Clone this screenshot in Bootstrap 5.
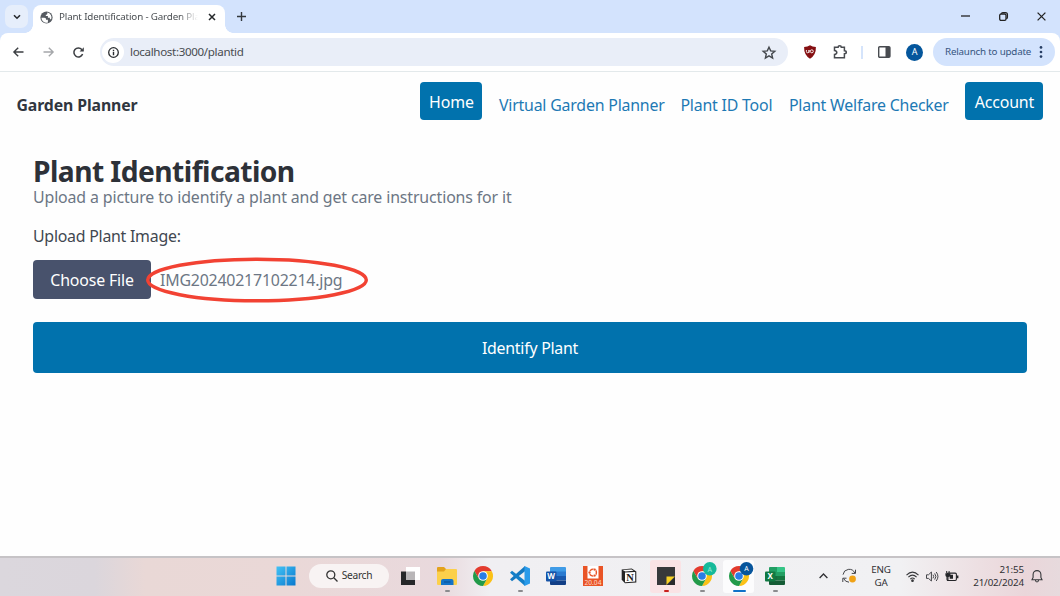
<!DOCTYPE html>
<html lang="en">
<head>
<meta charset="utf-8">
<meta name="viewport" content="width=device-width, initial-scale=1">
<title>Plant Identification - Garden Planner</title>
<link href="https://cdn.jsdelivr.net/npm/bootstrap@5.3.0/dist/css/bootstrap.min.css" rel="stylesheet">
<style>
  body { width:1060px; height:596px; overflow:hidden; background:#fefefe; font-family:"Noto Sans","Open Sans",sans-serif; color:#373c44; font-size:15.9px; letter-spacing:-.13px; }
  svg { display:block; flex:none; overflow:visible; }
  svg text { letter-spacing:0; }
  .tabstrip { height:33px; background:#d3e3fd; padding-left:5px; }
  .tab-menu { width:23px; height:23px; border-radius:7px; background:#e6eefb; margin-top:5px; }
  .active-tab { width:192px; height:28px; margin:5px 0 0 5px; background:#fff; border-radius:8px 8px 0 0; padding:0 9px 4px 7px; }
  .active-tab::before, .active-tab::after { content:""; position:absolute; bottom:0; width:8px; height:8px; }
  .active-tab::before { left:-8px; background:radial-gradient(circle at 0 0, transparent 7.5px, #fff 8px); }
  .active-tab::after { right:-8px; background:radial-gradient(circle at 100% 0, transparent 7.5px, #fff 8px); }
  .tab-title { width:139px; margin-left:6px; padding-top:1px; font-size:9.8px; letter-spacing:-.16px; color:#4a4e52; -webkit-mask-image:linear-gradient(90deg,#000 86%,transparent 100%); }
  .strip-bg { background:#d3e3fd; }
  .toolbar { height:39px; background:#fff; border-radius:8px 8px 0 0; border-bottom:1px solid #e3e9eb; padding:0 5px 0 11px; }
  .address { width:688px; height:28px; border-radius:14px; background:#e9eef8; margin-left:16px; padding:0 12px 0 2px; }
  .info-dot { width:22px; height:22px; border-radius:50%; background:#fff; }
  .url { font-size:11.6px; letter-spacing:-.34px; color:#484c50; margin-left:6px; }
  .avatar { width:17px; height:17px; border-radius:50%; background:#04569c; color:#fff; font-size:9px; }
  .relaunch { width:122px; height:28px; border-radius:14px; background:#d3e3fd; font-size:9.8px; color:#36557f; padding:0 12px 0 12px; letter-spacing:-.2px; }
  .site-nav { height:66px; padding:10px 16.6px 0 16.5px; }
  .brand { font-size:15.8px; font-weight:700; letter-spacing:-.1px; color:#30363f; margin-top:12px; }
  .site-link { color:#1d79b4; margin:12px 16.5px 0 0; text-decoration:none; white-space:nowrap; letter-spacing:-.2px; }
  .fill-btn { --bs-btn-bg:#0172ad; --bs-btn-color:#fff; --bs-btn-hover-bg:#0172ad; --bs-btn-hover-color:#fff; --bs-btn-border-width:0; --bs-btn-border-radius:4px; --bs-btn-font-size:15.9px; --bs-btn-padding-x:0; --bs-btn-padding-y:0; }
  .nav-btn { height:38px; padding-top:3px; }
  .plant-form { margin:0 33px; padding-top:15px; }
  .plant-form h1 { font-size:28.2px; line-height:36px; letter-spacing:-.55px; color:#2d3138; font-weight:700; }
  .sub { line-height:19px; color:#6c7684; margin-top:-1px; }
  .field-label { margin-top:18px; line-height:22px; color:#414750; letter-spacing:-.25px; }
  .file-row { margin-top:13px; height:39px; }
  .choose-btn { width:118px; height:39px; padding-top:2px; --bs-btn-bg:#48526c; --bs-btn-hover-bg:#48526c; letter-spacing:-.16px; }
  .file-name { margin-left:9px; padding-top:2px; width:183px; color:#6c7684; letter-spacing:-.2px; }
  .ring { position:absolute; left:-14px; top:-10px; }
  .submit-btn { height:51px; margin-top:23px; padding-top:2px; letter-spacing:-.25px; }
  .taskbar { position:fixed; z-index:0; bottom:0; height:40px; padding-bottom:2px; border-top:2px solid #c6c3c6; background:linear-gradient(90deg,#dbd7dd 0,#dbd6dc 95px,#e9d8d6 145px,#ead8d7 280px,#e9d9dd 440px,#f0eff2 490px,#f1f1f3 900px,#eddfe2 980px,#ead6da 1025px,#e7dadd 1060px); }
  .task-items { margin-left:267.5px; }
  .task { width:36.5px; height:36px; position:relative; flex:none; }
  .task.open::after { content:""; position:absolute; bottom:2px; left:16px; width:5px; height:2.5px; border-radius:2px; background:#8b8b8e; }
  .task.current::after { width:13px; left:12px; background:#0f72c9; }
  .task.alert-app::after { background:#c8201d; }
  .task.current::before, .task.alert-app::before { content:""; position:absolute; inset:2px 3px 1px 2px; border-radius:3px; background:#fcfcfd; z-index:-1; }
  .task.alert-app::before { background:#fae3e5; }
  .search-pill { width:80px; height:24px; border-radius:12px; background:#f8f3f3; font-size:10.2px; color:#333; margin:0 3px 0 5px; letter-spacing:-.3px; }
  .tray { font-size:9.8px; line-height:13px; color:#303034; letter-spacing:-.13px; padding-right:17px; }
</style>
</head>
<body>
<svg width="0" height="0" class="position-absolute">
  <defs>
    <g id="chrome">
      <path d="M10 5.2H18.8L18.66 5A10 10 0 0 0 1.34 5L5.8 12.4Z" fill="#e33b2e"/>
      <path d="M14.2 12.4 10 20A10 10 0 0 0 18.8 5.2H10Z" fill="#fbc116"/>
      <path d="M5.8 12.4 1.34 5A10 10 0 0 0 10 20L14.2 12.4Z" fill="#229a49"/>
      <circle cx="10" cy="10" r="4.8" fill="#fff"/><circle cx="10" cy="10" r="3.8" fill="#287de6"/>
    </g>
  </defs>
</svg>

<header>
  <div class="tabstrip d-flex">
    <div class="tab-menu d-flex align-items-center justify-content-center">
      <svg width="8" height="6" viewBox="0 0 8 6" fill="none" stroke="#26292d" stroke-width="1.6"><path d="m1 1.2 3 3 3-3"/></svg>
    </div>
    <div class="active-tab position-relative d-flex align-items-center">
      <svg width="13" height="13" viewBox="0 0 13 13"><circle cx="6.5" cy="6.5" r="6.1" fill="#565b61"/><path d="M1.4 6.7h2.8c1.5 0 2 .9 1.8 2h1.9v2.7a5 5 0 0 1-6.5-4.7ZM7.3 1.5v1.3c0 .7-.6 1-1.5 1v1.3H7.9v1.6h2v1.5h1.3a5 5 0 0 0-3.9-6.7Z" fill="#fff"/></svg>
      <div class="tab-title overflow-hidden text-nowrap">Plant Identification - Garden Planner</div>
      <svg class="ms-auto" width="8" height="8" viewBox="0 0 8 8" stroke="#25282b" stroke-width="1.5"><path d="m1 1 6 6m0-6-6 6"/></svg>
    </div>
    <div class="d-flex align-items-center flex-grow-1">
      <svg class="ms-2 me-auto" width="17" height="9" viewBox="-4 0 17 9" stroke="#33383d" stroke-width="1.4"><path d="M0 4.5h9M4.5 0v9"/></svg>
      <div class="d-flex align-items-center" style="gap:29px;padding-right:14.5px">
        <svg width="9" height="9" viewBox="0 0 9 9" stroke="#222" stroke-width="1.3"><path d="M0 4h9"/></svg>
        <svg width="9" height="9" viewBox="0 0 9 9" fill="none" stroke="#222" stroke-width="1.3"><rect x=".7" y="2" width="6.3" height="6.3" rx="1.3"/><path d="M2.4 1.9Q2.5.6 3.8.6h2.7Q8.4.6 8.4 2.6v2.6q0 1.3-1.2 1.5"/></svg>
        <svg width="9" height="9" viewBox="0 0 9 9" stroke="#222" stroke-width="1.3"><path d="m.6.6 7.8 7.8m0-7.8L.6 8.4"/></svg>
      </div>
    </div>
  </div>
  <div class="strip-bg">
  <div class="toolbar d-flex align-items-center">
    <div class="d-flex" style="gap:19px">
      <svg style="margin-left:2px" width="11" height="10" viewBox="0 0 11 10" fill="none" stroke="#3b3e42" stroke-width="1.4"><path d="M10.5 5H1M5.2.7.9 5l4.3 4.3"/></svg>
      <svg width="11" height="10" viewBox="0 0 11 10" fill="none" stroke="#a5a7aa" stroke-width="1.4"><path d="M.5 5H10M5.8.7 10.1 5 5.8 9.3"/></svg>
      <svg width="11" height="11" viewBox="0 0 11 11" fill="none" stroke="#3b3e42" stroke-width="1.5"><path d="M9.6 7.1A4.5 4.5 0 1 1 8.8 2.5l1 1.3"/><path d="M10.8.3v4.2H6.6L8 3.1h1.4V1.7Z" fill="#3b3e42" stroke="none"/></svg>
    </div>
    <div class="address d-flex align-items-center">
      <div class="info-dot d-flex align-items-center justify-content-center">
        <svg width="11" height="11" viewBox="0 0 11 11" fill="none" stroke="#292c30" stroke-width="1.3"><circle cx="5.5" cy="5.5" r="4.8"/><path d="M5.5 4.8v3.4M5.5 2.7V4" stroke-width="1.4"/></svg>
      </div>
      <span class="url">localhost:3000/plantid</span>
      <svg class="ms-auto" width="14" height="13" viewBox="0 0 14 13" fill="none" stroke="#43474c" stroke-width="1.4"><path d="m7 1.2 1.7 3.7 4.1.4-3.1 2.7.9 4L7 9.9 3.4 12l.9-4L1.2 5.3l4.1-.4Z"/></svg>
    </div>
    <svg style="margin-left:16px" width="12" height="14" viewBox="0 0 12 14"><path d="M6 .3Q8.3 2 11.9 2 12.2 10 6 13.7-.2 10 .1 2 3.7 2 6 .3Z" fill="#850f12"/><path d="M2.4 5v1.5q0 1.3 1.3 1.3T5 6.5V5m0 0v2.8" fill="none" stroke="#fff" stroke-width=".9"/><circle cx="7.8" cy="6.3" r="1.5" fill="none" stroke="#fff" stroke-width=".9"/></svg>
    <svg style="margin-left:17px" width="15" height="14" viewBox="0 0 15 14" fill="none" stroke="#484b50" stroke-width="1.5"><path d="M1.5 2.2H5.1Q5.1.8 6.7.8t1.6 1.4h3.1v3.5q1.9 0 1.9 1.5t-1.9 1.5v4.1H1.5V9.5Q3.8 9.2 3.8 7.5T1.5 5.5Z"/></svg>
    <div style="width:2px;height:13px;background:#d5e4fb;margin-left:13px"></div>
    <svg style="margin-left:15px" width="13" height="12" viewBox="0 0 13 12"><rect x=".7" y=".7" width="11.2" height="10.6" rx="1" fill="none" stroke="#484b50" stroke-width="1.4"/><path d="M7.5 1h4.6v10H7.5Z" fill="#484b50"/></svg>
    <div class="avatar d-flex align-items-center justify-content-center" style="margin-left:15px">A</div>
    <div class="relaunch ms-auto d-flex align-items-center justify-content-between text-nowrap"><span>Relaunch to update</span>
      <svg width="4" height="12" viewBox="0 0 4 12" fill="#263e64"><circle cx="2" cy="1.4" r="1.35"/><circle cx="2" cy="6" r="1.35"/><circle cx="2" cy="10.6" r="1.35"/></svg>
    </div>
  </div>
  </div>
</header>

<nav class="site-nav d-flex align-items-start">
  <div class="brand text-nowrap">Garden Planner</div>
  <div class="d-flex align-items-start ms-auto">
    <a class="btn fill-btn nav-btn d-flex align-items-center justify-content-center" style="width:62px;margin-right:16.5px">Home</a>
    <a class="site-link" style="width:165px">Virtual Garden Planner</a>
    <a class="site-link" style="width:92px">Plant ID Tool</a>
    <a class="site-link" style="width:160px">Plant Welfare Checker</a>
    <a class="btn fill-btn nav-btn d-flex align-items-center justify-content-center" style="width:78px">Account</a>
  </div>
</nav>

<main class="plant-form">
  <h1 class="m-0">Plant Identification</h1>
  <div class="sub">Upload a picture to identify a plant and get care instructions for it</div>
  <div class="field-label">Upload Plant Image:</div>
  <div class="file-row d-flex align-items-center">
    <button type="button" class="btn fill-btn choose-btn">Choose File</button>
    <div class="file-name position-relative"><span>IMG20240217102214.jpg</span>
      <svg class="ring" width="222" height="46" viewBox="0 0 222 46" fill="none" stroke="#f24233" stroke-width="3.4"><ellipse cx="111" cy="23" rx="109.3" ry="20.8"/></svg>
    </div>
  </div>
  <button type="button" class="btn fill-btn submit-btn w-100">Identify Plant</button>
</main>

<footer class="taskbar w-100 d-flex align-items-center">
  <div class="task-items d-flex align-items-center">
    <div class="task d-flex align-items-center justify-content-center">
      <svg width="20" height="20" viewBox="0 0 20 20"><defs><linearGradient id="win" x2="1" y2="1"><stop stop-color="#42c2f5"/><stop offset="1" stop-color="#0878ce"/></linearGradient></defs><path d="M.5.5h9v9h-9Zm10 0h9v9h-9Zm-10 10h9v9h-9Zm10 0h9v9h-9Z" fill="url(#win)"/></svg>
    </div>
    <div class="search-pill d-flex align-items-center justify-content-center">
      <svg class="me-1" width="12" height="12" viewBox="0 0 12 12" fill="none" stroke="#333" stroke-width="1.3"><circle cx="4.8" cy="4.8" r="4"/><path d="m7.8 7.8 3.7 3.7"/></svg>Search
    </div>
    <div class="task d-flex align-items-center justify-content-center">
      <svg width="20" height="20" viewBox="0 0 20 20"><path d="M1 5.5h14V19H1Z" fill="#262729"/><path d="M6 1h14v13H6Z" fill="#fff"/><path d="M6 5.5h9V14H6Z" fill="#b9b6b8"/></svg>
    </div>
    <div class="task open d-flex align-items-center justify-content-center">
      <svg width="20" height="18" viewBox="0 0 20 18"><path d="M0 1Q0 0 1 0h6l2 2h9v4H0Z" fill="#e3a21c"/><path d="M0 4.5h7L9 2h10q1 0 1 1v14q0 1-1 1H1q-1 0-1-1Z" fill="#fcd04b"/><path d="M4 18v-4q0-2 2-2h8.5q2 0 2 2v4Z" fill="#1473c8"/><path d="M7 15h6.5" stroke="#0b4e91"/></svg>
    </div>
    <div class="task d-flex align-items-center justify-content-center"><svg width="20" height="20" viewBox="0 0 20 20"><use href="#chrome"/></svg></div>
    <div class="task open d-flex align-items-center justify-content-center">
      <svg width="20" height="20" viewBox="0 0 20 20"><path d="M15 0 0 13.2l2 2L15 5.3Z" fill="#1478c0"/><path d="M15 20 0 6.8l2-2 13 9.9Z" fill="#147fc8"/><path d="m14.5 0 5.5 2.5v15L14.5 20Z" fill="#2a9bea"/></svg>
    </div>
    <div class="task d-flex align-items-center justify-content-center">
      <svg width="20" height="18" viewBox="0 0 20 18"><path d="M5 0h14q1 0 1 1v4H4V1q0-1 1-1Z" fill="#3f9be6"/><path d="M4 4.5h16V9H4Z" fill="#2a7ad0"/><path d="M4 9h16v4.5H4Z" fill="#1958ad"/><path d="M4 13.5h16V17q0 1-1 1H5q-1 0-1-1Z" fill="#123e86"/><rect y="4.5" width="10.5" height="10" rx="1" fill="#1552a6"/><text x="5.2" y="12.4" font-size="8" font-weight="700" fill="#fff" text-anchor="middle">W</text></svg>
    </div>
    <div class="task d-flex align-items-center justify-content-center">
      <svg width="20" height="20" viewBox="0 0 20 20"><path d="M0 0h20v20H0Z" fill="#e95426"/><path d="M4.5 0h11v12.5h-11Z" fill="#fff"/><circle cx="10" cy="6.6" r="3.4" fill="none" stroke="#e95426" stroke-width="1.4"/><g fill="#e95426" stroke="#fff" stroke-width=".6"><circle cx="6.5" cy="6.6" r="1.4"/><circle cx="11.7" cy="3.6" r="1.4"/><circle cx="11.7" cy="9.6" r="1.4"/></g><text x="10" y="19.2" font-size="6.6" fill="#ffd9cb" text-anchor="middle">20.04</text></svg>
    </div>
    <div class="task d-flex align-items-center justify-content-center">
      <svg width="16" height="16" viewBox="0 0 16 16"><path d="m.7 1.4 10-.8 4.6 2.8v11L4 15.3.7 11.7Z" fill="#252525"/><path d="m1.8 1.9 8.7-.5 2.2 1.4-8.3.6Z" fill="#fff"/><path d="m4 4.6 10.2-.6v9.6L4 14.2Z" fill="#fff"/><text x="9.1" y="12.6" font-family="Liberation Serif,serif" font-size="10.5" font-weight="700" fill="#222" text-anchor="middle">N</text></svg>
    </div>
    <div class="task open alert-app d-flex align-items-center justify-content-center">
      <svg width="18" height="18" viewBox="0 0 18 18"><path d="M0 0h18v9.5L9.5 18H0Z" fill="#38383a"/><path d="M9.5 18V9.5H18Z" fill="#fad124"/><path d="M18 9.5V18H9.5Z" fill="#292a2b"/></svg>
    </div>
    <div class="task open d-flex align-items-center justify-content-center">
      <svg width="20" height="20" viewBox="0 0 20 20"><use href="#chrome"/><circle cx="17.8" cy="2.8" r="6.8" fill="#15b99a"/><text x="17.8" y="5.5" font-size="7" fill="#94e9d7" text-anchor="middle">A</text></svg>
    </div>
    <div class="task open current d-flex align-items-center justify-content-center">
      <svg width="20" height="20" viewBox="0 0 20 20"><use href="#chrome"/><circle cx="17.5" cy="2.8" r="6.8" fill="#07559c"/><text x="17.5" y="5.4" font-size="7" fill="#fff" text-anchor="middle">A</text></svg>
    </div>
    <div class="task open d-flex align-items-center justify-content-center">
      <svg width="20" height="18" viewBox="0 0 20 18"><path d="M5 0h7v9H4V1q0-1 1-1Z" fill="#219e63"/><path d="M12 0h7q1 0 1 1v4h-8Z" fill="#35c486"/><path d="M12 5h8v4.5h-8Z" fill="#239f63"/><path d="M4 9h8v4.5H4Z" fill="#176c3d"/><path d="M12 9h8v4.5h-8Z" fill="#147740"/><path d="M4 13.5h16V17q0 1-1 1H5q-1 0-1-1Z" fill="#145b35"/><rect y="4.5" width="10.5" height="10" rx="1" fill="#117942"/><text x="5.2" y="12.4" font-size="8" font-weight="700" fill="#fff" text-anchor="middle">X</text></svg>
    </div>
  </div>
  <div class="tray ms-auto d-flex align-items-center text-nowrap">
    <svg width="9" height="6" viewBox="0 0 9 6" fill="none" stroke="#303034" stroke-width="1.3"><path d="m.6 5 3.9-4 3.9 4"/></svg>
    <svg style="margin-left:14px" width="15" height="14" viewBox="0 0 15 14" fill="none" stroke="#45464a" stroke-width="1"><path d="M1 5.7A6.2 6.2 0 0 1 12.8 4M13.5.7V4.4H9.7M7 13.2A6.2 6.2 0 0 1 1.6 9.5M.8 13V9.2H4.5"/><circle cx="10.5" cy="10" r="3.4" fill="#f0a215" stroke="none"/></svg>
    <div class="text-center" style="width:20px;margin-left:14px">ENG<br>GA</div>
    <svg style="margin-left:15px" width="13" height="11" viewBox="0 0 13 11" fill="none" stroke="#37383b" stroke-width="1.1"><path d="M.5 4.2Q6.5-1.9 12.5 4.2M2.4 6.2Q6.5 2 10.6 6.2M4.3 8.1Q6.5 5.9 8.7 8.1"/><circle cx="6.5" cy="9.7" r=".8" fill="#37383b"/></svg>
    <svg style="margin-left:7px" width="12" height="11" viewBox="0 0 12 11" fill="none" stroke="#45464a" stroke-width="1"><path d="M.5 3.8h2L5.4 1v9L2.5 7.4h-2ZM7 3.7q1.4 1.8 0 3.6M8.7 2.4q2.4 3.1 0 6.2M10.2 1q3.5 4.5 0 9"/></svg>
    <svg style="margin-left:7px" width="14" height="12" viewBox="0 0 14 12"><rect x="2" y="3.1" width="9.4" height="7.4" rx="1.2" fill="none" stroke="#242528" stroke-width="1.1"/><path d="M4.7 4.8H8v4H4.7ZM12 5.4h1.4v2.8H12Z" fill="#242528"/><path d="M.4 3.2h5v2Q5.4 7 3.5 7v4H2.3V7Q.4 7 .4 5.2ZM1.2 1h1v2h-1Zm2.4 0h1v2h-1Z" fill="#242528"/></svg>
    <div class="text-end" style="width:52px;margin-left:13px"><div>21:55</div><div class="d-flex justify-content-end">21/02/2024</div></div>
    <svg style="margin-left:7px" width="12" height="13" viewBox="0 0 12 13" fill="none" stroke="#37383b" stroke-width="1.1"><path d="M1 9.8 2.1 7.5V4.5a3.9 3.9 0 0 1 7.8 0v3L11 9.8ZM4.4 10q.2 2 1.6 2t1.6-2"/></svg>
  </div>
</footer>
<script src="https://cdn.jsdelivr.net/npm/bootstrap@5.3.0/dist/js/bootstrap.bundle.min.js"></script>
</body>
</html>
